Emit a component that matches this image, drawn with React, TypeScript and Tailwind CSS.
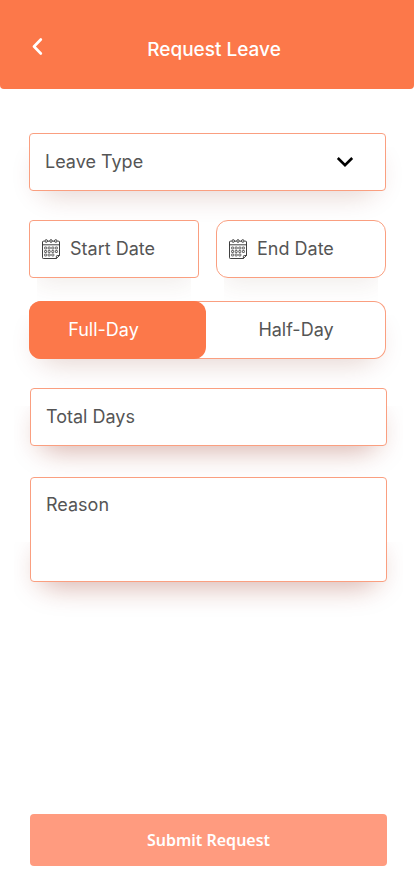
import React, { useState } from "react";

const field =
  "w-full border border-[#fa9f80] bg-white text-lg leading-7 text-[#555] placeholder:text-[#555] placeholder:opacity-100 outline-none";

const softShadow =
  "relative isolate before:absolute before:-z-10 before:inset-x-2 before:bottom-1 before:h-10 before:rounded-full before:shadow-[0_8px_28px_rgba(120,30,10,0.2)] before:[clip-path:inset(0_-24px_-40px_-24px)]";

const deepShadow =
  "relative isolate before:absolute before:-z-10 before:inset-x-2 before:bottom-1 before:h-9 before:rounded-full before:shadow-[0_8px_28px_rgba(140,30,10,0.36)] before:[clip-path:inset(0_-24px_-40px_-24px)]";

const dateShadow =
  "relative isolate before:absolute before:-z-10 before:inset-x-2 before:bottom-0 before:h-10 before:shadow-[0_6px_24px_rgba(100,50,30,0.09)] before:[clip-path:inset(0_0_-22px_0)]";

function CalendarIcon() {
  const columns = [3.6, 7.2, 10.8, 14.4];
  const rows = [9, 12.5, 16];
  return (
    <svg
      className="h-5 w-[18px] shrink-0"
      viewBox="0 0 18 20"
      fill="none"
      stroke="#2a2a2a"
      strokeWidth="0.9"
      aria-hidden="true"
    >
      <path d="M2.500 2.200H1.300Q.5 2.200.5 3v15.700q0 .8.8.8h13l3.200-3V3q0-.8-.8-.8h-1.200M5.800 2.200h1.500M10.700 2.200h1.500" />
      <path d="M.5 5.800h17" />
      <path d="M17.500 16.500h-2.200q-.9 0-.9.900v2.100" />
      <circle cx="4.200" cy="2" r="1.300" />
      <circle cx="9" cy="2" r="1.300" />
      <circle cx="13.800" cy="2" r="1.300" />
      {rows.map((y) =>
        columns.map((x) =>
          x > 14 && y === 16 ? null : (
            <rect
              key={`${x}-${y}`}
              x={x - 1}
              y={y - 1}
              width="2"
              height="2"
              rx="0.300"
              strokeWidth="0.700"
            />
          ),
        ),
      )}
    </svg>
  );
}

function DateField({ label, rounded }: { label: string; rounded: string }) {
  return (
    <div className={dateShadow}>
      <label className={`${field} ${rounded} flex h-[58px] items-center gap-[10px] pl-3`}>
        <CalendarIcon />
        <input
          type="text"
          aria-label={label}
          placeholder={label}
          className="w-full min-w-0 bg-transparent outline-none placeholder:text-[#555] placeholder:opacity-100"
        />
      </label>
    </div>
  );
}

export default function App() {
  const [duration, setDuration] = useState("full");

  return (
    <div className="flex min-h-screen flex-col bg-white font-['Inter',sans-serif]">
      <header className="grid h-[89px] grid-cols-[58px_1fr_44px] items-center rounded-b bg-[#fc784a] text-white">
        <button type="button" aria-label="Back" className="flex justify-center pl-4">
          <svg
            className="h-5 w-3"
            viewBox="0 0 12 20"
            fill="none"
            stroke="currentColor"
            strokeWidth="2.600"
            strokeLinecap="round"
            strokeLinejoin="round"
            aria-hidden="true"
          >
            <path d="M9.800 4.500 3 11.500l6.800 7" />
          </svg>
        </button>
        <h1 className="pt-[10px] text-center text-[19px] leading-7 font-medium">Request Leave</h1>
      </header>

      <form className="flex flex-1 flex-col pb-[30px]" onSubmit={(e) => e.preventDefault()}>
        <div className="flex flex-col pt-11 pr-[28px] pl-[29px]">
          <div className={softShadow}>
            <div className="grid items-center">
              <select
                aria-label="Leave Type"
                defaultValue=""
                className={`${field} col-start-1 row-start-1 h-[58px] appearance-none rounded pl-[15px]`}
              >
                <option value="">Leave Type</option>
              </select>
              <svg
                className="pointer-events-none col-start-1 row-start-1 mr-8 h-3 w-[18px] justify-self-end"
                viewBox="0 0 18 12"
                fill="none"
                stroke="#000"
                strokeWidth="2.600"
                aria-hidden="true"
              >
                <path d="M1.800 2 9 9.200 16.200 2" />
              </svg>
            </div>
          </div>

          <div className="mt-[29px] grid grid-cols-2 gap-[17px]">
            <DateField label="Start Date" rounded="rounded" />
            <DateField label="End Date" rounded="rounded-xl" />
          </div>

          <div className={`${softShadow} mt-[23px]`}>
            <div
              role="radiogroup"
              aria-label="Duration"
              className="grid h-[58px] grid-cols-[177fr_180fr] rounded-xl bg-white text-lg leading-7 text-[#555] ring-1 ring-[#fa9f80] ring-inset"
            >
              <label className="flex cursor-pointer items-center justify-center rounded-xl pr-7 has-checked:bg-[#fc784a] has-checked:text-white">
                <input
                  type="radio"
                  name="duration"
                  className="sr-only"
                  checked={duration === "full"}
                  onChange={() => setDuration("full")}
                />
                Full-Day
              </label>
              <label className="flex cursor-pointer items-center justify-center rounded-xl has-checked:bg-[#fc784a] has-checked:text-white">
                <input
                  type="radio"
                  name="duration"
                  className="sr-only"
                  checked={duration === "half"}
                  onChange={() => setDuration("half")}
                />
                Half-Day
              </label>
            </div>
          </div>
        </div>

        <div className="flex flex-1 flex-col pt-[29px] pr-[27px] pl-[30px]">
          <div className={deepShadow}>
            <input
              type="text"
              aria-label="Total Days"
              placeholder="Total Days"
              className={`${field} block h-[58px] rounded pb-[2px] pl-[15px]`}
            />
          </div>
          <div className={`${deepShadow} mt-[31px]`}>
            <textarea
              aria-label="Reason"
              placeholder="Reason"
              className={`${field} block h-[105px] resize-none rounded pt-[13px] pl-[15px]`}
            />
          </div>
          <button
            type="submit"
            className="mt-auto h-[52px] rounded bg-[#ff9b7f] font-['Noto_Sans',sans-serif] text-base font-semibold text-white"
          >
            Submit Request
          </button>
        </div>
      </form>
    </div>
  );
}
